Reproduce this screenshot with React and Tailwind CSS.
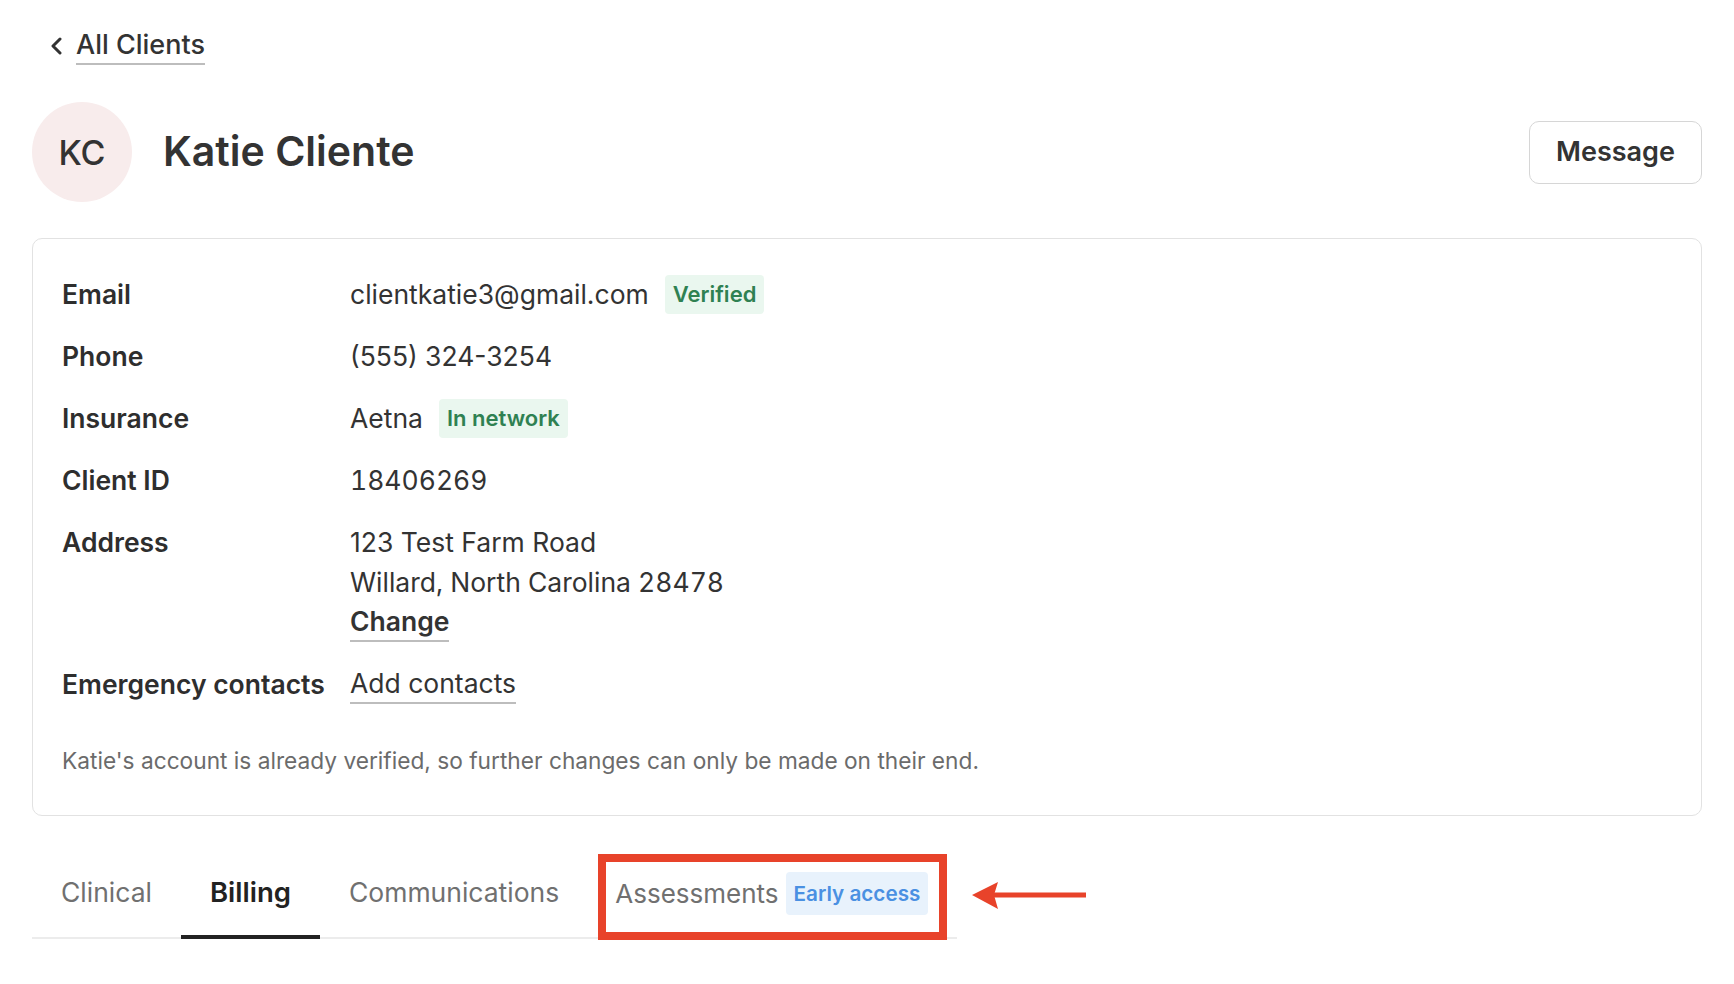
import React from 'react';

const Badge = ({ children, tone }) => {
  const styles = tone === 'green'
    ? 'bg-[#eaf7ef] text-[#2f8152]'
    : 'bg-[#e8f2fc] text-[#4a90e2]';
  return (
    <span className={`inline-flex items-center h-[39px] px-2 rounded-[4px] text-[22px] font-semibold leading-none ${styles}`}>
      {children}
    </span>
  );
};

const Label = ({ children }) => (
  <div className="font-semibold text-[#2e2e2e]">{children}</div>
);

const tabs = ['Clinical', 'Billing', 'Communications'];

export default function App() {
  return (
    <div className="min-h-screen bg-white px-8 pt-[27px] text-[#333] font-['Inter',sans-serif]">
      {/* back link */}
      <a href="#" className="inline-flex items-center gap-[12px] text-[#333]">
        <svg width="14" height="18" viewBox="0 0 14 18" fill="none" stroke="currentColor" strokeWidth="3" strokeLinecap="round" strokeLinejoin="round" className="ml-[18px]">
          <path d="M10 2 L3 9 L10 16" />
        </svg>
        <span className="text-[27px] font-medium leading-[36px] border-b-2 border-[#bdbdbd]">All Clients</span>
      </a>

      {/* header */}
      <div className="mt-[37px] flex items-center justify-between">
        <div className="flex items-center gap-[31px]">
          <div className="w-[100px] h-[100px] rounded-full bg-[#f8ecec] flex items-center justify-center text-[34px] font-medium text-[#333]">
            KC
          </div>
          <h1 className="text-[41px] font-semibold text-[#333]">Katie Cliente</h1>
        </div>
        <button className="h-[63px] w-[173px] border border-[#d6d6d6] rounded-[10px] text-[27px] font-semibold text-[#333] bg-white">
          Message
        </button>
      </div>

      {/* details card */}
      <div className="mt-[36px] border border-[#e2e2e2] rounded-[10px] pl-[29px] pr-8 pt-[35px] pb-[38px]">
        <div className="grid grid-cols-[288px_1fr] gap-y-[22px] text-[26.5px] leading-[40px]">
          <Label>Email</Label>
          <div className="flex items-center gap-4">
            <span>clientkatie3@gmail.com</span>
            <Badge tone="green">Verified</Badge>
          </div>

          <Label>Phone</Label>
          <div>(555) 324-3254</div>

          <Label>Insurance</Label>
          <div className="flex items-center gap-4">
            <span>Aetna</span>
            <Badge tone="green">In network</Badge>
          </div>

          <Label>Client ID</Label>
          <div className="tabular-nums">18406269</div>

          <Label>Address</Label>
          <div>
            <div>123 Test Farm Road</div>
            <div className="tabular-nums">Willard, North Carolina 28478</div>
            <div className="flex">
              <a href="#" className="font-semibold leading-[38px] border-b-2 border-[#bdbdbd]">Change</a>
            </div>
          </div>

          <Label>Emergency contacts</Label>
          <div className="flex">
            <a href="#" className="leading-[38px] border-b-2 border-[#bdbdbd]">Add contacts</a>
          </div>
        </div>

        <p className="mt-[41px] text-[22.7px] leading-[32px] text-[#6b6b6b]">
          Katie's account is already verified, so further changes can only be made on their end.
        </p>
      </div>

      {/* tabs */}
      <div className="relative mt-[28px]">
        <div className="inline-flex border-b-2 border-[#ececec]">
          {tabs.map((t) => {
            const active = t === 'Billing';
            return (
              <div
                key={t}
                className={`relative px-[29px] pt-[28px] pb-[22px] leading-[40px] ${
                  active ? 'text-[27.5px] font-semibold text-[#222]' : 'text-[26.5px] text-[#707070]'
                }`}
              >
                {t}
                {active && <span className="absolute left-0 right-0 bottom-[-2px] h-1 bg-[#222]" />}
              </div>
            );
          })}
          <div className="relative pl-[27px] pr-[29px] pt-[28px] pb-[22px] flex items-center gap-[7px]">
            <span className="text-[26px] leading-[40px] text-[#707070]">Assessments</span>
            <span className="inline-flex items-center h-[43px] px-2 rounded-[4px] bg-[#e8f2fc] text-[#4a90e2] text-[20.7px] font-semibold">
              Early access
            </span>
            <span className="absolute left-[10px] right-[10px] top-[10px] bottom-[-3px] border-[8px] border-[#e8432a] pointer-events-none" />
          </div>
        </div>
        <svg
          className="absolute left-[940px] top-[37px]"
          width="116"
          height="30"
          viewBox="0 0 116 30"
        >
          <polygon points="0,14 26,1 22,14 26,28" fill="#e8432a" />
          <rect x="20" y="11.5" width="94" height="5" fill="#e8432a" />
        </svg>
      </div>
    </div>
  );
}
